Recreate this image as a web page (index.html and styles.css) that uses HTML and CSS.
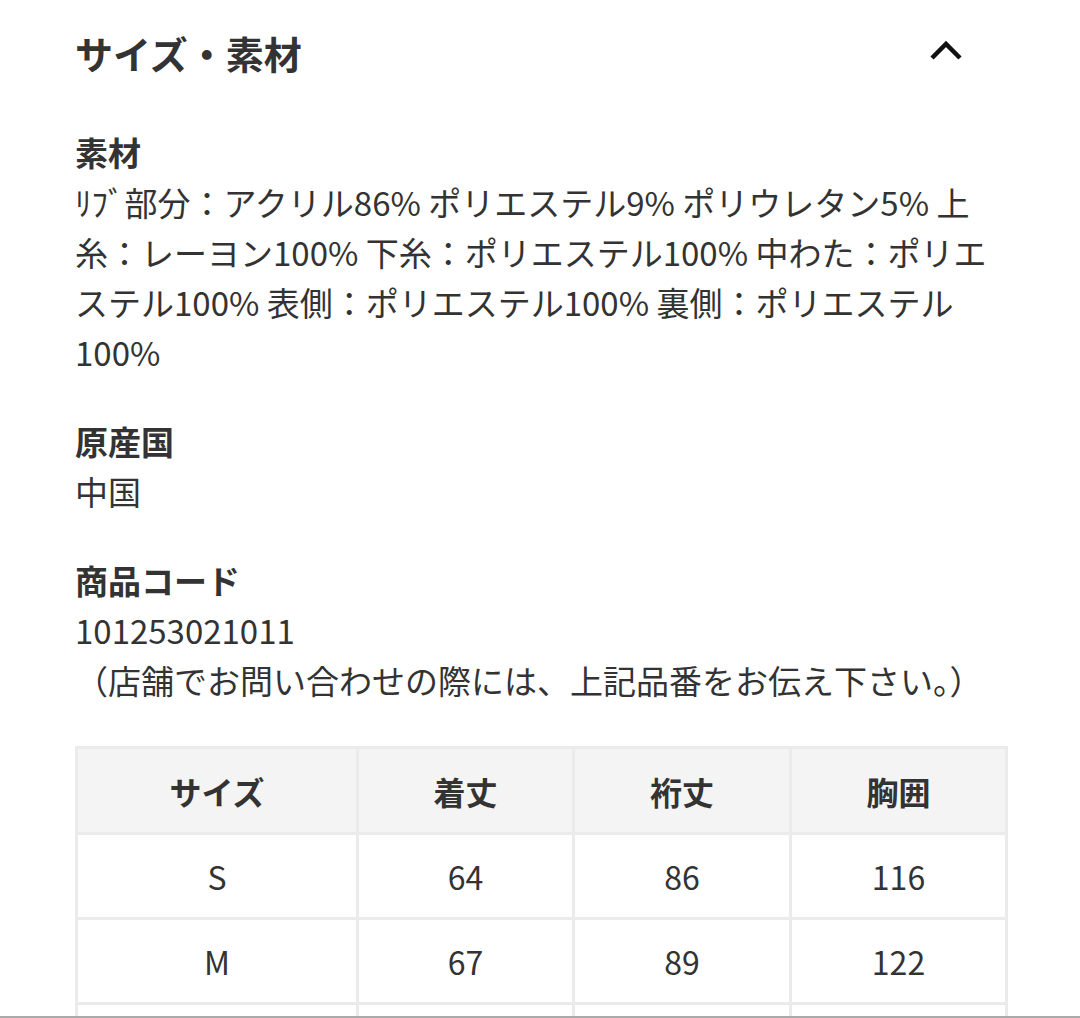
FILE: index.html
```html
<!DOCTYPE html>
<html lang="ja">
<head>
<meta charset="utf-8">
<link rel="stylesheet" href="styles.css">
</head>
<body>
<div class="page">
  <div class="head">
    <h2 class="title">サイズ・素材</h2>
    <svg class="chev" width="34" height="22" viewBox="0 0 34 22"><polyline points="3,18 17,4 31,18" fill="none" stroke="#111" stroke-width="4.5"/></svg>
  </div>
  <section class="sec">
    <h3 class="label">素材</h3>
    <p class="txt">ﾘﾌﾞ部分：アクリル86% ポリエステル9% ポリウレタン5% 上糸：レーヨン100% 下糸：ポリエステル100% 中わた：ポリエステル100% 表側：ポリエステル100% 裏側：ポリエステル100%</p>
  </section>
  <section class="sec">
    <h3 class="label">原産国</h3>
    <p class="txt">中国</p>
  </section>
  <section class="sec">
    <h3 class="label">商品コード</h3>
    <p class="txt">101253021011<br>（店舗でお問い合わせの際には、上記品番をお伝え下さい。）</p>
  </section>
  <table class="size">
    <colgroup><col class="c1"><col class="c2"><col class="c3"><col class="c4"></colgroup>
    <thead><tr><th>サイズ</th><th>着丈</th><th>裄丈</th><th>胸囲</th></tr></thead>
    <tbody>
      <tr><td>S</td><td>64</td><td>86</td><td>116</td></tr>
      <tr><td>M</td><td>67</td><td>89</td><td>122</td></tr>
      <tr><td>L</td><td>70</td><td>92</td><td>128</td></tr>
    </tbody>
  </table>
</div>
<div class="bottomline"></div>
</body>
</html>
```
FILE: styles.css
```css
html, body { margin: 0; padding: 0; background: #fff; }
body { font-family: "Noto Sans CJK JP", "Noto Sans", sans-serif; color: #333; }
.page { width: 930px; padding: 0 0 0 75px; }
.head { display: flex; align-items: center; justify-content: space-between; height: 56px; padding-top: 25px; padding-right: 42px; }
.title { margin: 0; font-size: 38px; font-weight: 700; line-height: 56px; color: #333; }
.chev { display: block; margin-top: -4px; }
.sec { margin-top: 46px; }
.sec + .sec { margin-top: 39px; }
.label { margin: 0; font-size: 33px; font-weight: 700; line-height: 50px; }
.txt { margin: 0; font-size: 33px; line-height: 50px; }
.size { margin-top: 41px; border-collapse: collapse; width: 930px; table-layout: fixed; font-size: 32px; }
.c1 { width: 281px; } .c2 { width: 216px; } .c3 { width: 217px; } .c4 { width: 216px; }
.size th, .size td { border: 3px solid #ebebeb; text-align: center; height: 82px; padding: 0; }
.size th { background: #f4f4f4; font-weight: 700; height: 83px; }
.bottomline { position: fixed; left: 0; right: 0; bottom: 0; height: 2px; background: #aaa; }
```
